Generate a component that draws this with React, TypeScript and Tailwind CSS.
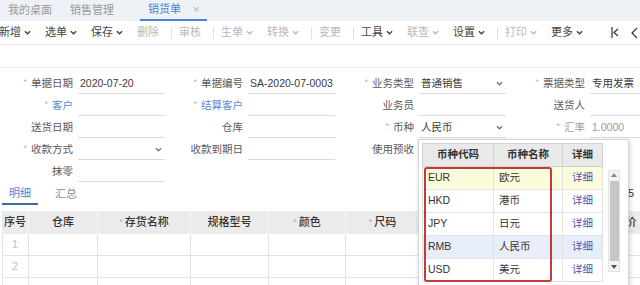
import React from 'react';

type Field = {
  label: string;
  req?: boolean;
  link?: boolean;
  value?: string;
  select?: boolean;
  muted?: boolean;
  noInput?: boolean;
};

type ToolItem = { text?: string; menu?: boolean; off?: boolean; sep?: boolean };

const toolbar: ToolItem[] = [
  { text: '新增', menu: true },
  { text: '选单', menu: true },
  { text: '保存', menu: true },
  { text: '删除', off: true },
  { sep: true },
  { text: '审核', off: true },
  { sep: true },
  { text: '生单', menu: true, off: true },
  { text: '转换', menu: true, off: true },
  { sep: true },
  { text: '变更', off: true },
  { sep: true },
  { text: '工具', menu: true },
  { text: '联查', menu: true, off: true },
  { text: '设置', menu: true },
  { sep: true },
  { text: '打印', menu: true, off: true },
  { text: '更多', menu: true },
];

const formRows: (Field | null)[][] = [
  [
    { label: '单据日期', req: true, value: '2020-07-20' },
    { label: '单据编号', req: true, value: 'SA-2020-07-0003' },
    { label: '业务类型', req: true, value: '普通销售', select: true },
    { label: '票据类型', req: true, value: '专用发票', select: true },
  ],
  [
    { label: '客户', req: true, link: true },
    { label: '结算客户', req: true, link: true },
    { label: '业务员' },
    { label: '送货人' },
  ],
  [
    { label: '送货日期' },
    { label: '仓库' },
    { label: '币种', req: true, value: '人民币', select: true },
    { label: '汇率', req: true, value: '1.0000', muted: true },
  ],
  [
    { label: '收款方式', req: true, select: true },
    { label: '收款到期日' },
    { label: '使用预收', noInput: true },
    null,
  ],
  [{ label: '抹零' }, null, null, null],
];

const columns = [
  { title: '序号', w: 'w-[27px]' },
  { title: '仓库', w: 'w-[69px]' },
  { title: '存货名称', w: 'w-[93px]', req: true },
  { title: '规格型号', w: 'w-[78px]' },
  { title: '颜色', w: 'w-[77px]', req: true },
  { title: '尺码', w: 'w-[74px]', req: true },
  { title: '数量', w: 'w-[100px]' },
  { title: '单价', w: 'w-[212px]' },
];

const currencies = [
  { code: 'EUR', name: '欧元', bg: 'bg-[#fcfcdc]' },
  { code: 'HKD', name: '港币', bg: 'bg-white' },
  { code: 'JPY', name: '日元', bg: 'bg-white' },
  { code: 'RMB', name: '人民币', bg: 'bg-[#e8eef9]' },
  { code: 'USD', name: '美元', bg: 'bg-white' },
];

function Chevron({ className = '' }: { className?: string }) {
  return (
    <svg viewBox="0 0 8 5" className={`w-[7px] h-[5px] shrink-0 ${className}`} fill="none" stroke="currentColor" strokeWidth="1.6">
      <path d="M1 1l3 3 3-3" />
    </svg>
  );
}

function FormField({ f }: { f: Field | null }) {
  if (!f) return <div className="h-[22px]" />;
  const labelColor = f.link ? 'text-[#5a8ad6]' : f.muted ? 'text-[#a0a0a0]' : 'text-[#5a5a5a]';
  return (
    <div className="flex items-center h-[22px]">
      <label className={`w-[73px] shrink-0 text-right whitespace-nowrap ${labelColor}`}>
        {f.req && <span className="text-[9px] text-[#b8b8b8] mr-[4px] align-[2px]">*</span>}
        {f.label}
      </label>
      {!f.noInput && (
        <div className="ml-[5px] w-[87px] h-[20px] shrink-0 border-b border-[#dcdcdc] flex items-center justify-between pl-[2px] pr-[3px]">
          <span className={`whitespace-nowrap ${f.muted ? 'text-[#999]' : 'text-[#3a3a3a]'}`}>{f.value}</span>
          {f.select && <Chevron className="text-[#777]" />}
        </div>
      )}
    </div>
  );
}

function CurrencyPicker() {
  return (
    <div className="absolute left-[418px] top-[139px] w-[211px] h-[150px] bg-white border border-[#d4d4d4] shadow-[1px_2px_5px_rgba(0,0,0,0.18)] p-[3px] flex">
      <div className="w-[181px] shrink-0">
        <div className="flex h-[24px] bg-[#e9e9e9] border border-[#d2d2d2] font-semibold text-[#333]">
          <div className="w-[71px] flex items-center justify-center border-r border-[#d2d2d2]">币种代码</div>
          <div className="w-[69px] flex items-center justify-center border-r border-[#d2d2d2]">币种名称</div>
          <div className="flex-1 flex items-center justify-center">详细</div>
        </div>
        {currencies.map((c) => (
          <div key={c.code} className={`flex h-[23px] border-x border-b border-[#e2e2e2] ${c.bg}`}>
            <div className="w-[71px] flex items-center pl-[5px] border-r border-[#e2e2e2] text-[#333]">{c.code}</div>
            <div className="w-[69px] flex items-center pl-[5px] border-r border-[#e2e2e2] text-[#333]">{c.name}</div>
            <div className="flex-1 flex items-center justify-center text-[#5252ad]">详细</div>
          </div>
        ))}
      </div>
      <div className="ml-[5px] mt-[27px] w-[12px] h-[102px] bg-[#f3f3f3] border border-[#e4e4e4] flex flex-col items-center">
        <svg viewBox="0 0 6 4" className="w-[6px] h-[4px] mt-[2px] text-[#888]" fill="currentColor">
          <path d="M0 4L3 0l3 4z" />
        </svg>
        <div className="w-[9px] flex-1 my-[4px] bg-[#c6c6c6]" />
        <svg viewBox="0 0 6 4" className="w-[6px] h-[4px] mb-[2px] text-[#555]" fill="currentColor">
          <path d="M0 0h6L3 4z" />
        </svg>
      </div>
    </div>
  );
}

export default function App() {
  return (
    <div className="relative w-[640px] h-[285px] overflow-hidden bg-white text-[10.5px] font-['Liberation_Sans','Noto_Sans_CJK_SC',sans-serif]">
      {/* tab strip */}
      <div className="flex h-[21px] bg-[#eef1f6] text-[11px]">
        <div className="ml-[8px] flex items-center text-[#9a9a9a]">我的桌面</div>
        <div className="ml-[18px] flex items-center text-[#9a9a9a]">销售管理</div>
        <div className="ml-[26px] flex items-center px-[8px] border-b-2 border-[#4a84d2] text-[#4a84d2]">
          销货单
          <span className="ml-[12px] text-[#b5b5b5] text-[11px]">×</span>
        </div>
      </div>

      {/* toolbar */}
      <div className="flex items-center h-[24px] border-b border-[#e2e2e2] text-[11px] -ml-[8px]">
        {toolbar.map((t, i) =>
          t.sep ? (
            <div key={i} className="ml-[5px] w-px h-[12px] bg-[#e0e0e0]" />
          ) : (
            <div key={i} className={`flex items-center px-[7px] ${t.off ? 'text-[#b9b9b9]' : 'text-[#444]'}`}>
              {t.text}
              {t.menu && <Chevron className="ml-[3px]" />}
            </div>
          )
        )}
        <div className="ml-auto flex items-center text-[#333]">
          <svg viewBox="0 0 8 11" className="w-[8px] h-[11px]" fill="none" stroke="currentColor" strokeWidth="1.2">
            <path d="M1 0v11M7 2L3 5.5 7 9" />
          </svg>
          <svg viewBox="0 0 7 12" className="ml-[12px] mr-[2px] w-[7px] h-[12px]" fill="none" stroke="currentColor" strokeWidth="1.2">
            <path d="M6 1L1 6l5 5" />
          </svg>
        </div>
      </div>

      {/* form */}
      <div className="h-[23px] border-b border-[#f0f0f0]" />
      <div className="pt-[5px] grid grid-cols-[170px_171px_171px_128px]">
        {formRows.flat().map((f, i) => (
          <FormField key={i} f={f} />
        ))}
      </div>

      {/* detail tabs */}
      <div className="flex h-[22px] text-[11px]">
        <div className="ml-[2px] w-[36px] flex items-center justify-center border-b-2 border-[#3e6a9a] text-[#4d86d0]">明细</div>
        <div className="ml-[17px] flex items-center text-[#8a8a8a]">汇总</div>
        <div className="ml-auto mr-[6px] mt-[2px] text-[#333]">5</div>
      </div>

      {/* detail grid */}
      <div className="mt-[6px] ml-[2px] w-[730px] text-[11px]">
        <div className="flex h-[23px] bg-[#ebebeb] text-[#333] font-medium">
          {columns.map((c) => (
            <div key={c.title} className={`${c.w} shrink-0 flex items-center justify-center border-r border-[#f7f7f7]`}>
              {c.req && <span className="text-[9px] text-[#b0b0b0] mr-[2px] self-start mt-[5px]">*</span>}
              {c.title}
            </div>
          ))}
        </div>
        {[1, 2, 3].map((n) => (
          <div key={n} className="flex h-[22px] border-b border-l border-[#e3e3e3]">
            {columns.map((c, i) => (
              <div key={c.title} className={`${c.w} shrink-0 flex items-center justify-center border-r border-[#e3e3e3] text-[#c4c4c4] ${i === 0 ? '-ml-px' : ''}`}>
                {i === 0 && n < 3 ? n : ''}
              </div>
            ))}
          </div>
        ))}
      </div>

      <CurrencyPicker />
      {/* highlight drawn over the list */}
      <div className="absolute left-[424px] top-[167px] w-[128px] h-[115px] border-2 border-[#c33a3a] rounded-[3px]" />
    </div>
  );
}
